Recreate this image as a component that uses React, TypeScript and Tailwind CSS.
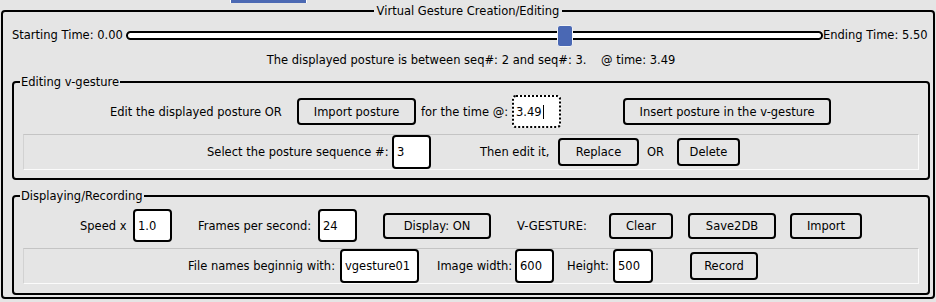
import React from "react";

const Btn = ({ label, w, h = "h-[27px]" }: { label: string; w: string; h?: string }) => (
  <div className={`${w} ${h} shrink-0 flex items-center justify-center border-2 border-black rounded-[4px] bg-[#e5e5e5]`}>
    {label}
  </div>
);

const Field = ({ value, w, h = "h-[33px]" }: { value: string; w: string; h?: string }) => (
  <div className={`${w} ${h} shrink-0 flex items-center pl-[3px] bg-white border-2 border-black rounded-[4px]`}>
    {value}
  </div>
);

const Label = ({ text, w, pl = "" }: { text: string; w: string; pl?: string }) => (
  <span className={`${w} ${pl} shrink-0 whitespace-nowrap`}>{text}</span>
);

export default function App() {
  return (
    <div
      className="w-[936px] h-[302px] bg-[#e5e5e5] text-black text-[11.5px] leading-[16px] overflow-hidden"
      style={{ fontFamily: '"DejaVu Sans", Verdana, sans-serif' }}
    >
      {/* tab strip */}
      <div className="h-[3px] pl-[230px]">
        <div className="w-[77px] h-[3px] bg-[#4c69b3] border-x border-white" />
      </div>

      <fieldset className="ml-[1px] w-[934px] border-2 border-black rounded-[4px] pb-[2px]">
        <legend className="mx-auto px-[3px] leading-[16px]">Virtual Gesture Creation/Editing</legend>

        {/* time slider */}
        <div className="mt-[5px] h-[22px] flex items-center pl-[9px]">
          <span className="w-[114px] shrink-0 whitespace-nowrap">Starting Time: 0.00</span>
          <div className="relative w-[697px] shrink-0 h-[9px] border-2 border-black bg-white rounded-full">
            <div className="absolute left-[429px] -top-[8px] w-[16px] h-[22px] bg-[#4a68b4] border border-[#f4f4f4] rounded-[3px]" />
          </div>
          <span className="whitespace-nowrap">Ending Time: 5.50</span>
        </div>

        <div className="mt-[6px] h-[16px] text-center whitespace-pre pl-[6px]">
          {"The displayed posture is between seq#: 2 and seq#: 3.    @ time: 3.49"}
        </div>

        {/* Editing v-gesture */}
        <fieldset className="mt-[6px] ml-[9px] w-[918px] border-2 border-black rounded-[4px] pb-[8px]">
          <legend className="ml-[6px] px-[1px] leading-[16px]">Editing v-gesture</legend>

          <div className="mt-[5px] h-[33px] flex items-center pl-[96px]">
            <Label text="Edit the displayed posture OR" w="w-[187px]" />
            <Btn label="Import posture" w="w-[119px]" />
            <Label text="for the time @:" w="w-[96px]" pl="pl-[5px]" />
            <div className="w-[49px] h-[33px] shrink-0 flex items-center pl-[2px] bg-white border-2 border-dotted border-black rounded-[4px]">
              3.49
              <span className="w-[1px] h-[14px] bg-black ml-[1px]" />
            </div>
            <div className="ml-[62px]">
              <Btn label="Insert posture in the v-gesture" w="w-[208px]" />
            </div>
          </div>

          <div className="mt-[6px] ml-[9px] w-[896px] h-[36px] border border-t-[#c4c4c4] border-l-[#d2d2d2] border-b-[#fbfbfb] border-r-[#fbfbfb] flex items-center pl-[183px]">
            <Label text="Select the posture sequence #:" w="w-[185px]" />
            <Field value="3" w="w-[39px]" h="h-[34px]" />
            <Label text="Then edit it," w="w-[127px]" pl="pl-[49px]" />
            <Btn label="Replace" w="w-[81px]" h="h-[28px]" />
            <Label text="OR" w="w-[38px]" pl="pl-[8px]" />
            <Btn label="Delete" w="w-[63px]" h="h-[28px]" />
          </div>
        </fieldset>

        {/* Displaying/Recording */}
        <fieldset className="mt-[8px] ml-[9px] w-[918px] border-2 border-black rounded-[4px] pb-[9px]">
          <legend className="ml-[6px] px-[1px] leading-[16px]">Displaying/Recording</legend>

          <div className="mt-[5px] h-[33px] flex items-center pl-[66px]">
            <Label text="Speed x" w="w-[53px]" />
            <Field value="1.0" w="w-[39px]" />
            <Label text="Frames per second:" w="w-[146px]" pl="pl-[26px]" />
            <Field value="24" w="w-[39px]" />
            <div className="ml-[26px]">
              <Btn label="Display: ON" w="w-[108px]" h="h-[26px]" />
            </div>
            <Label text="V-GESTURE:" w="w-[118px]" pl="pl-[26px]" />
            <Btn label="Clear" w="w-[64px]" h="h-[26px]" />
            <div className="ml-[15px]">
              <Btn label="Save2DB" w="w-[88px]" h="h-[26px]" />
            </div>
            <div className="ml-[14px]">
              <Btn label="Import" w="w-[72px]" h="h-[26px]" />
            </div>
          </div>

          <div className="mt-[6px] ml-[9px] w-[896px] h-[36px] border border-t-[#c4c4c4] border-l-[#d2d2d2] border-b-[#fbfbfb] border-r-[#fbfbfb] flex items-center pl-[164px]">
            <Label text="File names beginnig with:" w="w-[152px]" />
            <Field value="vgesture01" w="w-[79px]" h="h-[34px]" />
            <Label text="Image width:" w="w-[96px]" pl="pl-[18px]" />
            <Field value="600" w="w-[39px]" h="h-[34px]" />
            <Label text="Height:" w="w-[59px]" pl="pl-[13px]" />
            <Field value="500" w="w-[40px]" h="h-[34px]" />
            <div className="ml-[37px]">
              <Btn label="Record" w="w-[68px]" h="h-[28px]" />
            </div>
          </div>
        </fieldset>
      </fieldset>
    </div>
  );
}
